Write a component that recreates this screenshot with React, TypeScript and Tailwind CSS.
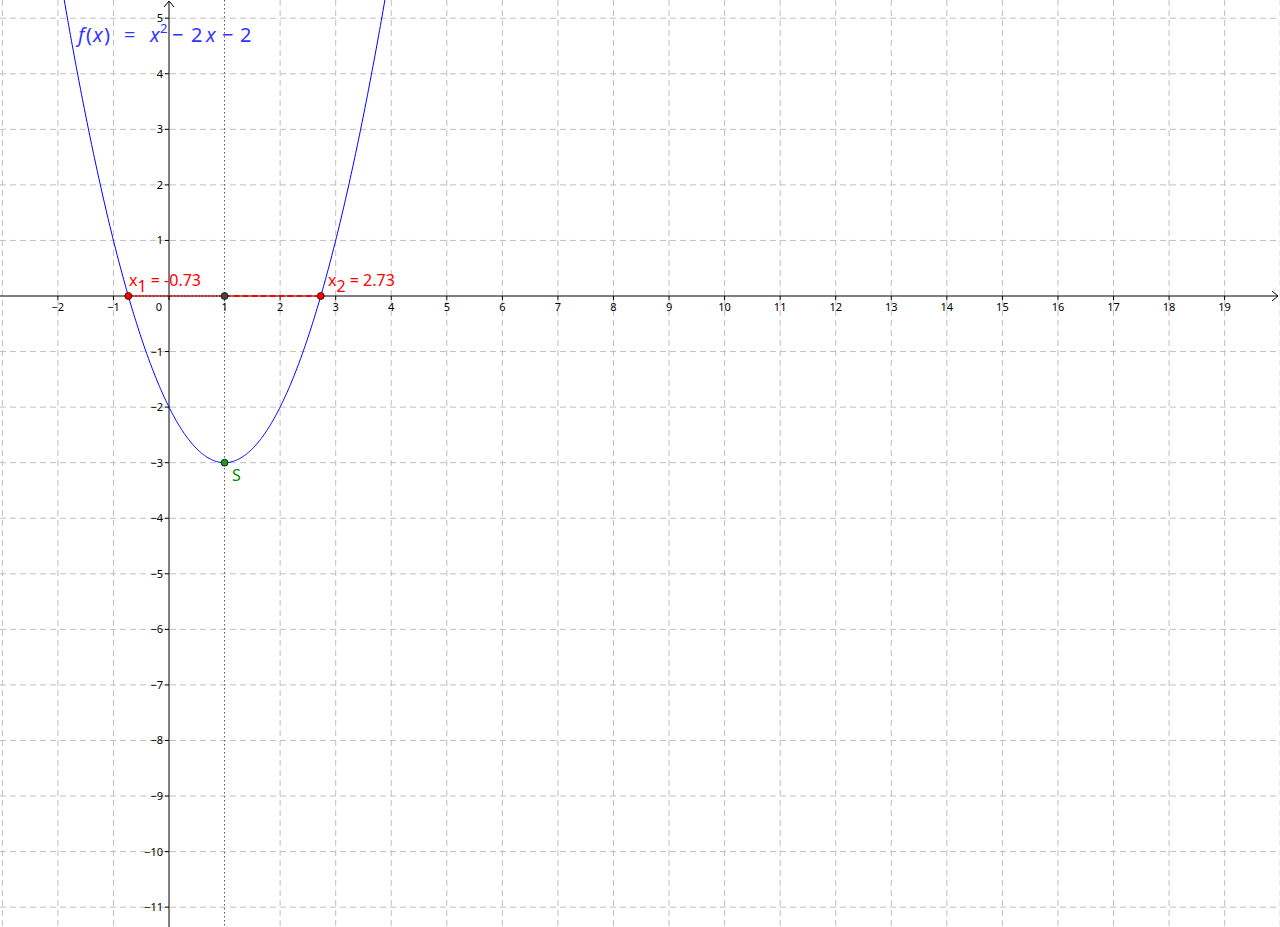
const U = 55.56;
const OX = 169;
const OY = 296;
const W = 1280;
const H = 927;
const px = (x: number) => OX + x * U;
const py = (y: number) => OY - y * U;

function Graph() {
  const xs: number[] = [];
  for (let k = -3; k <= 20; k++) xs.push(k);
  const ys: number[] = [];
  for (let k = -12; k <= 6; k++) ys.push(k);
  let d = "";
  for (let i = 0; i <= 400; i++) {
    const x = -2.3 + (i / 400) * 6.6;
    const y = x * x - 2 * x - 2;
    d += `${i ? "L" : "M"}${px(x).toFixed(2)},${py(y).toFixed(2)}`;
  }
  const r1 = 1 - Math.sqrt(3);
  const r2 = 1 + Math.sqrt(3);
  return (
    <svg width={W} height={H} className="block font-['Liberation_Sans',Arial,sans-serif]">
      <rect width={W} height={H} fill="#fff" />
      {xs.map((k) => k !== 0 && k !== 1 && (
        <line key={"gx" + k} x1={px(k)} y1={0} x2={px(k)} y2={H} stroke="#c0c0c0" strokeDasharray="6 4" />
      ))}
      {ys.map((k) => k !== 0 && (
        <line key={"gy" + k} x1={0} y1={py(k)} x2={W} y2={py(k)} stroke="#c0c0c0" strokeDasharray="6 4" />
      ))}
      <line x1={px(1)} y1={0} x2={px(1)} y2={H} stroke="#555" strokeDasharray="1.5 2.5" />
      {/* axes */}
      <line x1={0} y1={OY} x2={W - 2} y2={OY} stroke="#000" />
      <path d={`M${W - 8},${OY - 5} L${W - 2},${OY} L${W - 8},${OY + 5}`} fill="none" stroke="#000" />
      <line x1={OX} y1={H} x2={OX} y2={1} stroke="#000" />
      <path d={`M${OX - 5},7 L${OX},1 L${OX + 5},7`} fill="none" stroke="#000" />
      {xs.map((k) => k >= -2 && k <= 19 && (
        <g key={"tx" + k}>
          <line x1={px(k)} y1={OY} x2={px(k)} y2={OY + 4} stroke="#000" />
          <text x={k === 0 ? px(k) - 10 : px(k)} y={OY + 15} fontSize={11} textAnchor="middle">
            {k < 0 ? `\u2212${-k}` : k}
          </text>
        </g>
      ))}
      {ys.map((k) => k !== 0 && k >= -11 && k <= 5 && (
        <g key={"ty" + k}>
          <line x1={OX - 4} y1={py(k)} x2={OX} y2={py(k)} stroke="#000" />
          <text x={OX - 6} y={py(k) + 4} fontSize={11} textAnchor="end">
            {k < 0 ? `\u2212${-k}` : k}
          </text>
        </g>
      ))}
      <path d={d} fill="none" stroke="#0000ff" strokeWidth={1} />
      <line x1={px(r1)} y1={OY} x2={px(1)} y2={OY} stroke="#ff0000" strokeWidth={2} strokeDasharray="1.5 2" />
      <line x1={px(1)} y1={OY} x2={px(r2)} y2={OY} stroke="#ff0000" strokeWidth={2} strokeDasharray="6 3" />
      <circle cx={px(r1)} cy={OY} r={3.5} fill="#ff0000" stroke="#000" strokeWidth={0.7} />
      <circle cx={px(r2)} cy={OY} r={3.5} fill="#ff0000" stroke="#000" strokeWidth={0.7} />
      <circle cx={px(1)} cy={OY} r={3.5} fill="#444" stroke="#000" strokeWidth={0.7} />
      <circle cx={px(1)} cy={py(-3)} r={3.5} fill="#1a9a1a" stroke="#000" strokeWidth={0.7} />
      <text x={129} y={286} fontSize={16} fill="#ff0000">x<tspan dy={6}>1</tspan><tspan dy={-6}> = -0.73</tspan></text>
      <text x={328} y={286} fontSize={16} fill="#ff0000">x<tspan dy={6}>2</tspan><tspan dy={-6}> = 2.73</tspan></text>
      <text x={232} y={481} fontSize={16} fill="#008800">S</text>
      <text y={42} fontSize={20} fill="#3333ff" className="font-['Liberation_Serif',serif]">
        <tspan x={78} fontStyle="italic">f</tspan>
        <tspan x={86}>(</tspan>
        <tspan x={93} fontStyle="italic">x</tspan>
        <tspan x={104}>)</tspan>
        <tspan x={124}>=</tspan>
        <tspan x={150} fontStyle="italic">x</tspan>
        <tspan x={160} y={33} fontSize={13}>2</tspan>
        <tspan x={172} y={42}>−</tspan>
        <tspan x={191}>2</tspan>
        <tspan x={206} fontStyle="italic">x</tspan>
        <tspan x={222}>−</tspan>
        <tspan x={240}>2</tspan>
      </text>
    </svg>
  );
}

export default function App() {
  return (
    <div className="w-[1280px] h-[927px] overflow-hidden bg-white">
      <Graph />
    </div>
  );
}
